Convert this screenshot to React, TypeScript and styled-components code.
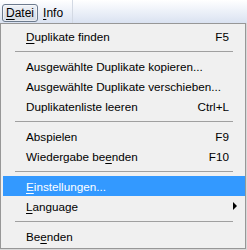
import React from 'react';
import styled, { createGlobalStyle } from 'styled-components';

const Global = createGlobalStyle`
  html, body { margin: 0; padding: 0; background: #ffffff; }
  body { font-family: "Liberation Sans", Arial, sans-serif; font-size: 11.7px; color: #000; }
`;

const Frame = styled.div`
  width: 247px;
  height: 250px;
  overflow: hidden;
  background: #d8d8d8;
`;

const MenuBar = styled.div`
  display: flex;
  align-items: flex-start;
  height: 23px;
  box-sizing: border-box;
  padding: 4px 0 0 2px;
  gap: 1px;
  background: linear-gradient(to bottom, #ffffff 0%, #eef2f9 45%, #dae2f1 100%);
`;

const BarButton = styled.div<{ $active?: boolean }>`
  height: 18px;
  box-sizing: border-box;
  padding: 0 3px;
  display: flex;
  align-items: center;
  font-size: 12px;
  border: 1px solid ${p => (p.$active ? '#6d7b8e' : 'transparent')};
  border-radius: 3px;
  background: ${p => (p.$active ? 'linear-gradient(to bottom, #eef1f6, #d3dae5)' : 'transparent')};
  box-shadow: ${p => (p.$active ? 'inset 0 0 0 1px rgba(255,255,255,0.5)' : 'none')};
`;

const BarDivider = styled.div`
  width: 1px;
  height: 23px;
  margin-top: -4px;
  margin-left: 4px;
  background: #d3d9e3;
`;

const Menu = styled.div`
  width: 246px;
  box-sizing: border-box;
  border: 1px solid #979797;
  background: #f0f0f0;
  padding: 2px 0 2px 2px;
  display: flex;
  flex-direction: column;
`;

const Item = styled.div<{ $hot?: boolean }>`
  display: grid;
  grid-template-columns: 1fr auto 16px;
  align-items: center;
  height: 20px;
  padding-left: 23px;
  background: ${p => (p.$hot ? '#3399ff' : 'transparent')};
  color: ${p => (p.$hot ? '#ffffff' : '#000000')};
  white-space: nowrap;
`;

const Shortcut = styled.span`
  text-align: right;
`;

const ArrowCell = styled.span`
  display: flex;
  align-items: center;
  padding-left: 4px;
`;

const Arrow = styled.span`
  width: 0;
  height: 0;
  border-top: 4px solid transparent;
  border-bottom: 4px solid transparent;
  border-left: 4px solid #000;
`;

const Separator = styled.div`
  height: 10px;
  display: flex;
  align-items: center;
  padding: 0 12px;
  &::before {
    content: '';
    flex: 1;
    height: 1px;
    background: #a0a0a0;
  }
`;

const Key = styled.u`
  text-decoration: underline;
  text-underline-offset: 2px;
`;

type Entry =
  | { sep: true }
  | { sep?: false; label: React.ReactNode; shortcut?: string; sub?: boolean; hot?: boolean };

const entries: Entry[] = [
  { label: <><Key>D</Key>uplikate finden</>, shortcut: 'F5' },
  { sep: true },
  { label: 'Ausgewählte Duplikate kopieren...' },
  { label: 'Ausgewählte Duplikate verschieben...' },
  { label: 'Duplikatenliste leeren', shortcut: 'Ctrl+L' },
  { sep: true },
  { label: 'Abspielen', shortcut: 'F9' },
  { label: <>Wiedergabe be<Key>e</Key>nden</>, shortcut: 'F10' },
  { sep: true },
  { label: <><Key>E</Key>instellungen...</>, hot: true },
  { label: <><Key>L</Key>anguage</>, sub: true },
  { sep: true },
  { label: <>Be<Key>e</Key>nden</> },
];

export default function App() {
  return (
    <Frame>
      <Global />
      <MenuBar>
        <BarButton $active><span><Key>D</Key>atei</span></BarButton>
        <BarButton><span><Key>I</Key>nfo</span></BarButton>
        <BarDivider />
      </MenuBar>
      <Menu>
        {entries.map((e, i) =>
          e.sep ? (
            <Separator key={i} />
          ) : (
            <Item key={i} $hot={e.hot}>
              <span>{e.label}</span>
              <Shortcut>{e.shortcut ?? ''}</Shortcut>
              <ArrowCell>{e.sub ? <Arrow /> : null}</ArrowCell>
            </Item>
          )
        )}
      </Menu>
    </Frame>
  );
}
